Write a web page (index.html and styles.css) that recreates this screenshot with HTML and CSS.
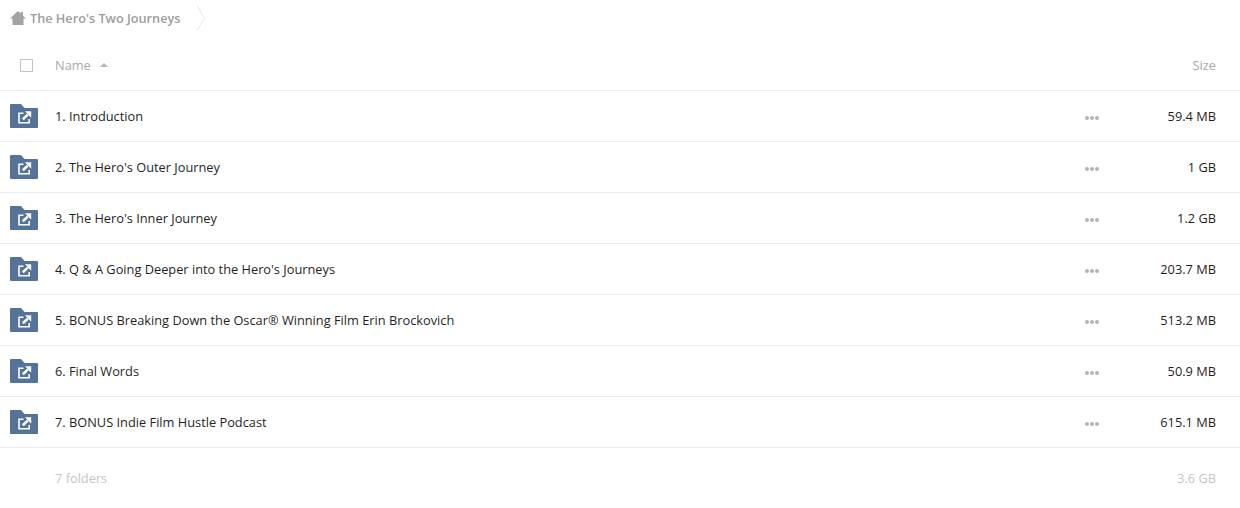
FILE: index.html
```html
<!DOCTYPE html>
<html lang="en">
<head>
<meta charset="utf-8">
<title>The Hero's Two Journeys</title>
<link rel="stylesheet" href="styles.css">
</head>
<body>
<nav class="crumbs">
  <svg class="home" width="16" height="14" viewBox="0 0 16 14"><path d="M8 0 L10.8 2.6 V1 H13 V4.7 L16 7.5 H13.5 V14 H2.5 V7.5 H0 Z" fill="#a3a3a3"/></svg>
  <span class="crumb">The Hero's Two Journeys</span>
  <svg class="chev" width="10" height="26" viewBox="0 0 10 26"><path d="M1 0.5 L8.5 13 L1 25.5" fill="none" stroke="#e6e6e6" stroke-width="1"/></svg>
</nav>
<div class="head row-grid">
  <span class="check"></span>
  <span class="name-head">Name <i class="sort"></i></span>
  <span></span>
  <span class="size-head">Size</span>
</div>
<ul class="list">
  <li class="row row-grid">
    <svg class="folder" width="28" height="24" viewBox="0 0 28 24"><use href="#f"/></svg>
    <span class="name">1. Introduction</span><span class="dots"><b></b><b></b><b></b></span><span class="size">59.4 MB</span>
  </li>
  <li class="row row-grid">
    <svg class="folder" width="28" height="24" viewBox="0 0 28 24"><use href="#f"/></svg>
    <span class="name">2. The Hero's Outer Journey</span><span class="dots"><b></b><b></b><b></b></span><span class="size">1 GB</span>
  </li>
  <li class="row row-grid">
    <svg class="folder" width="28" height="24" viewBox="0 0 28 24"><use href="#f"/></svg>
    <span class="name">3. The Hero's Inner Journey</span><span class="dots"><b></b><b></b><b></b></span><span class="size">1.2 GB</span>
  </li>
  <li class="row row-grid">
    <svg class="folder" width="28" height="24" viewBox="0 0 28 24"><use href="#f"/></svg>
    <span class="name">4. Q &amp; A Going Deeper into the Hero's Journeys</span><span class="dots"><b></b><b></b><b></b></span><span class="size">203.7 MB</span>
  </li>
  <li class="row row-grid">
    <svg class="folder" width="28" height="24" viewBox="0 0 28 24"><use href="#f"/></svg>
    <span class="name">5. BONUS Breaking Down the Oscar® Winning Film Erin Brockovich</span><span class="dots"><b></b><b></b><b></b></span><span class="size">513.2 MB</span>
  </li>
  <li class="row row-grid">
    <svg class="folder" width="28" height="24" viewBox="0 0 28 24"><use href="#f"/></svg>
    <span class="name">6. Final Words</span><span class="dots"><b></b><b></b><b></b></span><span class="size">50.9 MB</span>
  </li>
  <li class="row row-grid">
    <svg class="folder" width="28" height="24" viewBox="0 0 28 24"><use href="#f"/></svg>
    <span class="name">7. BONUS Indie Film Hustle Podcast</span><span class="dots"><b></b><b></b><b></b></span><span class="size">615.1 MB</span>
  </li>
</ul>
<div class="foot row-grid">
  <span></span>
  <span>7 folders</span>
  <span></span>
  <span class="foot-size">3.6 GB</span>
</div>
<svg class="defs" width="0" height="0">
  <defs>
    <g id="f">
      <path d="M1 0 H11 L14.5 4 H27 Q28 4 28 5 V23 Q28 24 27 24 H1 Q0 24 0 23 V1 Q0 0 1 0 Z" fill="#557299"/>
      <path d="M13.5 9.3 H9 V18.8 H19.2 V15" fill="none" stroke="#fff" stroke-width="1.6"/>
      <path d="M12.8 15.2 L17.8 10.6" fill="none" stroke="#fff" stroke-width="2.6"/>
      <path d="M15 7.3 H21.2 V13.8 Z" fill="#fff"/>
    </g>
  </defs>
</svg>
</body>
</html>
```

FILE: styles.css
```css
* { box-sizing: border-box; }
html, body { margin: 0; padding: 0; }
body {
  width: 1240px;
  height: 508px;
  overflow: hidden;
  background: #fff;
  font-family: "Open Sans", "Noto Sans", sans-serif;
  font-size: 12.8px;
  color: #1f1f1f;
}
.crumbs {
  height: 41px;
  padding: 0 0 5px 10px;
  display: flex;
  align-items: center;
}
.home { margin-right: 4px; }
.crumb { font-size: 12.7px; font-weight: 600; color: #9c9c9c; }
.chev { margin-left: 16px; }
.row-grid {
  display: grid;
  grid-template-columns: 45px 1fr 45px 96px;
  align-items: center;
  padding: 0 24px 0 10px;
}
.head {
  height: 50px;
  border-bottom: 1px solid #ededed;
  color: #a8a8a8;
}
.check {
  width: 13px;
  height: 13px;
  margin-left: 10px;
  border: 1px solid #c4c4c4;
  background: #fff;
}
.name-head { display: flex; align-items: center; gap: 9px; padding-bottom: 2px; }
.sort {
  width: 0;
  height: 0;
  border-left: 4px solid transparent;
  border-right: 4px solid transparent;
  border-bottom: 4px solid #b5b5b5;
}
.size-head { text-align: right; padding-bottom: 2px; }
.list { list-style: none; margin: 0; padding: 0; }
.row {
  height: 51px;
  border-bottom: 1px solid #ededed;
}
.folder { display: block; margin-top: -1px; }
.dots { display: flex; gap: 1px; padding-left: 10px; padding-top: 4px; }
.dots b {
  width: 4px;
  height: 4px;
  border-radius: 50%;
  background: #b4b4b4;
}
.size { text-align: right; }
.foot {
  height: 59px;
  color: #c6c6c6;
}
.foot-size { text-align: right; }
.defs { position: absolute; }
```
